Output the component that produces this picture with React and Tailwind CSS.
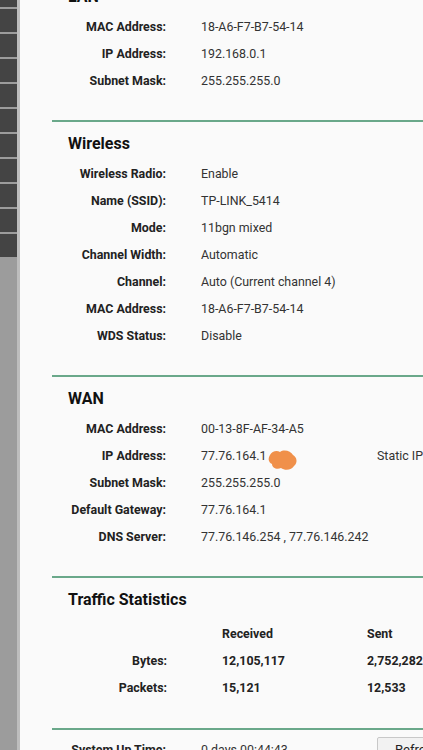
import React from 'react';

const lan = [
  ['MAC Address:', '18-A6-F7-B7-54-14'],
  ['IP Address:', '192.168.0.1'],
  ['Subnet Mask:', '255.255.255.0'],
];

const wireless = [
  ['Wireless Radio:', 'Enable'],
  ['Name (SSID):', 'TP-LINK_5414'],
  ['Mode:', '11bgn mixed'],
  ['Channel Width:', 'Automatic'],
  ['Channel:', 'Auto (Current channel 4)'],
  ['MAC Address:', '18-A6-F7-B7-54-14'],
  ['WDS Status:', 'Disable'],
];

const wan = [
  ['MAC Address:', '00-13-8F-AF-34-A5'],
  ['IP Address:', '77.76.164.1', 'Static IP'],
  ['Subnet Mask:', '255.255.255.0'],
  ['Default Gateway:', '77.76.164.1'],
  ['DNS Server:', '77.76.146.254 , 77.76.146.242'],
];

function Row({ label, value, extra, scribble }) {
  return (
    <div className="flex h-[27px] items-center whitespace-nowrap">
      <div className="w-[114px] shrink-0 text-right font-bold text-[#222]">{label}</div>
      <div className="relative w-[211px] shrink-0 pl-[35px] text-[#333]">
        {value}
        {scribble && (
          <svg className="absolute left-[101px] top-[2px]" width="32" height="22" viewBox="0 0 32 22">
            <path
              d="M3 6 C5 2 10 1 13 3 C17 0 24 2 26 6 C30 8 31 14 27 17 C25 21 18 22 14 19 C10 21 5 19 5 15 C1 13 1 9 3 6 Z"
              fill="#f0904a"
            />
          </svg>
        )}
      </div>
      {extra && <div className="text-[#333]">{extra}</div>}
    </div>
  );
}

function Section({ title, rows }) {
  return (
    <section className="border-t-2 border-[#6aa88a] pt-[12px] pb-[25px]">
      <h2 className="h-[20px] pl-4 text-[16px] leading-[20px] font-bold text-[#111]">{title}</h2>
      <div className="mt-[7px]">
        {rows.map((r, i) => (
          <Row key={i} label={r[0]} value={r[1]} extra={r[2]} scribble={title === 'WAN' && i === 1} />
        ))}
      </div>
    </section>
  );
}

export default function App() {
  const menu = Array.from({ length: 10 });

  return (
    <div className="flex h-[750px] w-[423px] overflow-hidden bg-[#fafafa] text-[12.4px] font-['Roboto','Liberation_Sans',sans-serif]">
      {/* left menu strip */}
      <aside className="flex w-[17px] shrink-0 flex-col bg-[#9c9c9c]">
        <div className="h-[7px] bg-[#444]" />
        {menu.map((_, i) => (
          <div key={i} className="mt-[2px] h-[23px] bg-[#444]" />
        ))}
      </aside>
      <div className="w-[3px] shrink-0 bg-[#bdbdbd]" />

      <main className="ml-[32px] mt-[-27px] flex-1">
        <Section title="LAN" rows={lan} />
        <Section title="Wireless" rows={wireless} />
        <Section title="WAN" rows={wan} />

        <section className="border-t-2 border-[#6aa88a] pt-[12px] pb-[26px]">
          <h2 className="h-[20px] pl-4 text-[16px] leading-[20px] font-bold text-[#111]">Traffic Statistics</h2>
          <div className="mt-[11px] font-bold text-[#222]">
            <div className="flex h-[27px] items-center whitespace-nowrap">
              <div className="w-[115px] shrink-0" />
              <div className="w-[200px] shrink-0 pl-[55px]">Received</div>
              <div>Sent</div>
            </div>
            <div className="flex h-[27px] items-center whitespace-nowrap">
              <div className="w-[115px] shrink-0 text-right">Bytes:</div>
              <div className="w-[200px] shrink-0 pl-[55px]">12,105,117</div>
              <div>2,752,282</div>
            </div>
            <div className="flex h-[27px] items-center whitespace-nowrap">
              <div className="w-[115px] shrink-0 text-right">Packets:</div>
              <div className="w-[200px] shrink-0 pl-[55px]">15,121</div>
              <div>12,533</div>
            </div>
          </div>
        </section>

        <section className="border-t-2 border-[#6aa88a] pt-[7px]">
          <div className="flex items-start whitespace-nowrap">
            <div className="w-[114px] shrink-0 pt-[4px] text-right font-bold text-[#222]">System Up Time:</div>
            <div className="w-[211px] shrink-0 pl-[35px] pt-[4px] text-[#333]">0 days 00:44:43</div>
            <button className="rounded-[2px] border border-[#c8c8c8] bg-[#f2f2f2] px-[17px] py-[3px] text-[13px] leading-[18px] text-[#222]">
              Refresh
            </button>
          </div>
        </section>
      </main>
    </div>
  );
}
